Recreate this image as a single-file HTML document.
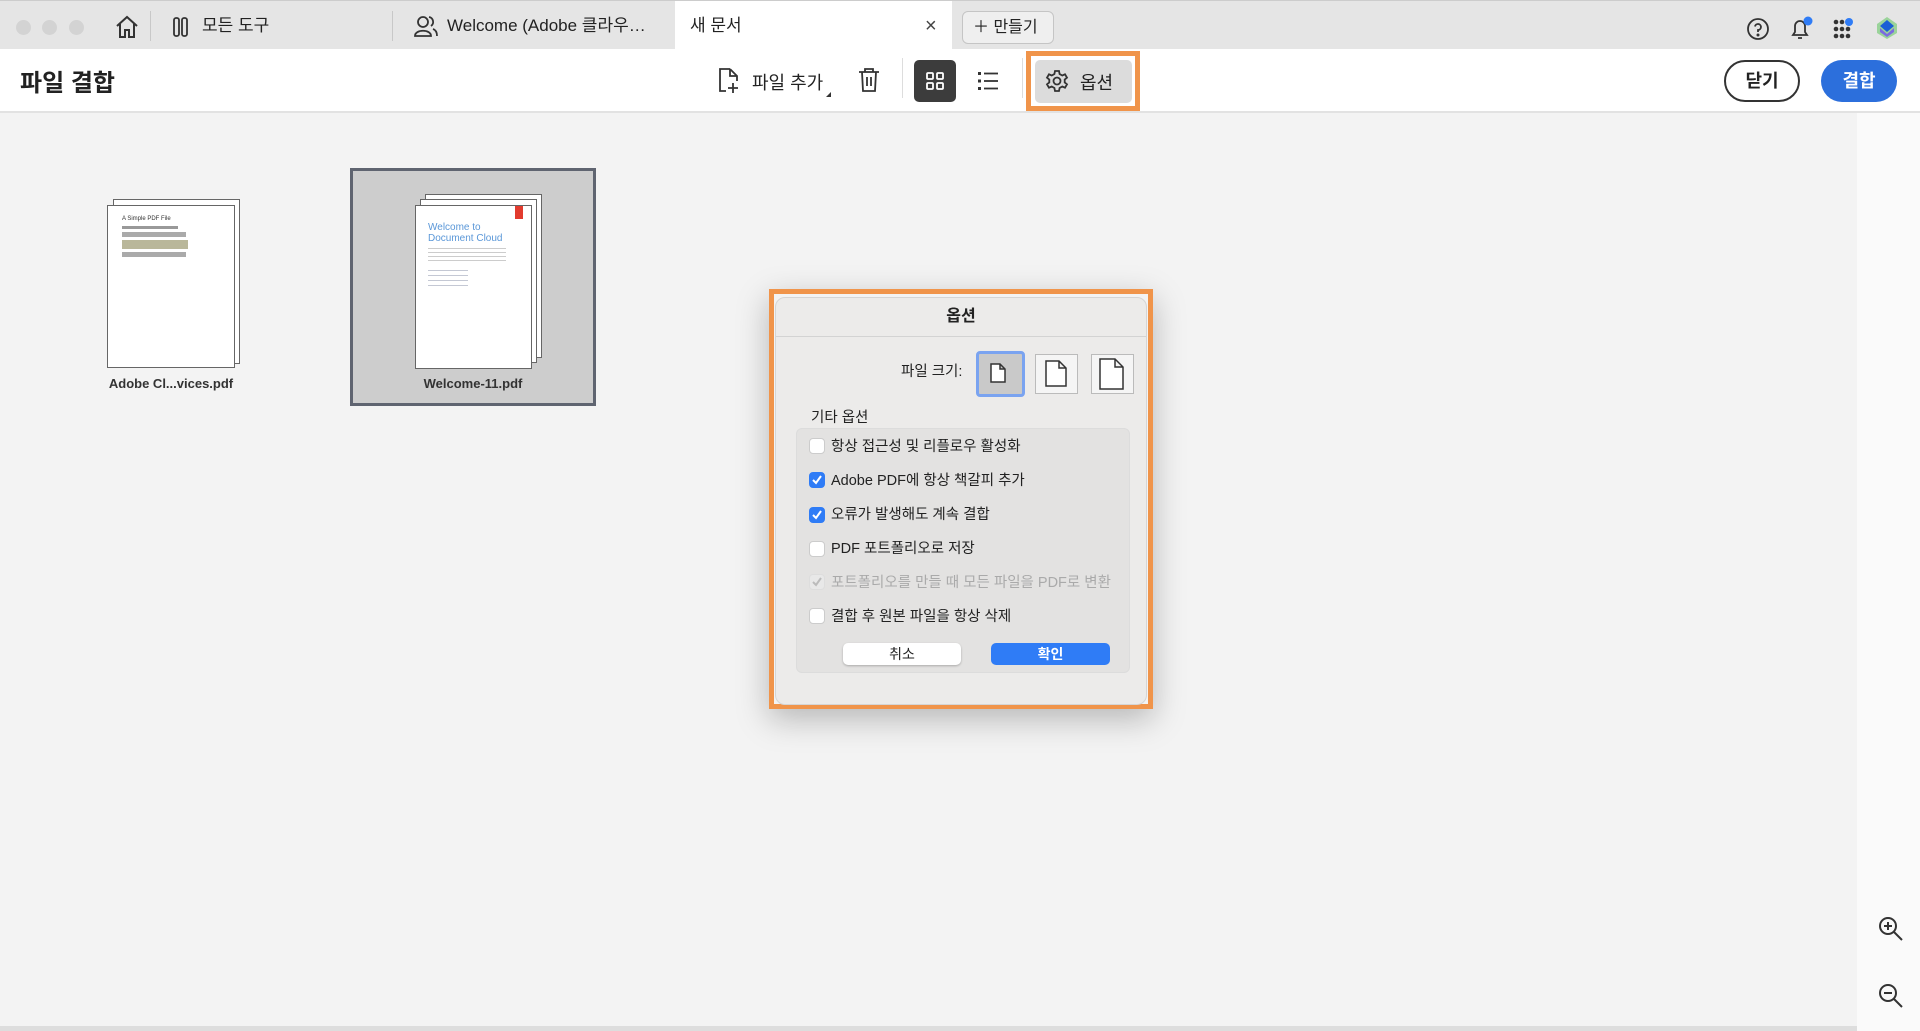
<!DOCTYPE html>
<html><head><meta charset="utf-8"><style>
*{box-sizing:border-box;margin:0;padding:0}
body{width:1920px;height:1031px;position:relative;overflow:hidden;background:#f3f3f3;font-family:"Liberation Sans","Noto Sans CJK KR",sans-serif;color:#222}
.a{position:absolute}
.tabbar{left:0;top:0;width:1920px;height:49px;background:#e5e5e5;border-top:1px solid #ccc}
.tl{width:15px;height:15px;border-radius:50%;background:#d3d3d3;top:19px}
.tb{top:0;height:100%;font-size:17px;line-height:50px}
.toolbar{left:0;top:49px;width:1920px;height:64px;background:#fff;border-bottom:2px solid #e2e2e2}
.cb{width:16px;height:16px;border-radius:4px;background:#fff;border:1px solid #ccc}
.cb.on{background:#2f7cf6;border-color:#2f7cf6}
.lbl{font-size:14.5px;color:#222;line-height:16px}
</style></head><body>
<div class="a tabbar">
 <div class="a tl" style="left:16px"></div><div class="a tl" style="left:42px"></div><div class="a tl" style="left:69px"></div>
 <svg class="a" style="left:114px;top:14px" width="26" height="24" viewBox="0 0 26 24" fill="none" stroke="#333" stroke-width="2"><path d="M3 11 L13 2 L23 11 M6 9 V22 H11 V15 H15 V22 H20 V9"/></svg>
 <div class="a" style="left:150px;top:10px;width:1px;height:30px;background:#c8c8c8"></div>
 <svg class="a" style="left:172px;top:15px" width="18" height="22" viewBox="0 0 18 22" fill="none" stroke="#333" stroke-width="1.8"><rect x="2" y="2" width="5" height="18" rx="2"/><rect x="10" y="2" width="5" height="18" rx="2"/></svg>
 <div class="a tb" style="left:202px">모든 도구</div>
 <div class="a" style="left:392px;top:10px;width:1px;height:30px;background:#c8c8c8"></div>
 <svg class="a" style="left:413px;top:13px" width="26" height="24" viewBox="0 0 26 24" fill="none" stroke="#333" stroke-width="1.8"><circle cx="10" cy="8" r="5"/><path d="M2 22 C2 15 18 15 18 22 Z"/><path d="M16 3 A5 5 0 0 1 18 12 M20 15 C23 16 24 19 24 22"/></svg>
 <div class="a tb" style="left:447px">Welcome (Adobe 클라우…</div>
 <div class="a" style="left:675px;top:0;width:277px;height:49px;background:#fff"></div>
 <div class="a tb" style="left:690px">새 문서</div>
 <div class="a tb" style="left:925px;font-size:20px;color:#444">×</div>
 <div class="a" style="left:962px;top:10px;width:92px;height:33px;border:1px solid #c5c5c5;border-radius:6px;background:#efefef;font-size:16px;line-height:31px;padding-left:10px">＋ 만들기</div>
 <svg class="a" style="left:1746px;top:16px" width="24" height="24" viewBox="0 0 24 24" fill="none" stroke="#333" stroke-width="1.8"><circle cx="12" cy="12" r="10"/><path d="M9 9.5 A3 3 0 1 1 12 13 V15"/><circle cx="12" cy="18" r=".6" fill="#333"/></svg>
 <svg class="a" style="left:1788px;top:14px" width="26" height="28" viewBox="0 0 26 28" fill="none" stroke="#333" stroke-width="1.8"><path d="M5 20 H19 L17 17 V11 A5 5 0 0 0 7 11 V17 Z M10 23 H14"/><circle cx="20" cy="6" r="4.5" fill="#2f7cf6" stroke="none"/></svg>
 <svg class="a" style="left:1832px;top:16px" width="26" height="24" viewBox="0 0 26 24" fill="#333"><g><circle cx="4" cy="5" r="2.3"/><circle cx="10" cy="5" r="2.3"/><circle cx="4" cy="12" r="2.3"/><circle cx="10" cy="12" r="2.3"/><circle cx="16" cy="12" r="2.3"/><circle cx="4" cy="19" r="2.3"/><circle cx="10" cy="19" r="2.3"/><circle cx="16" cy="19" r="2.3"/></g><circle cx="17" cy="5" r="4" fill="#2f7cf6"/></svg>
 <svg class="a" style="left:1876px;top:15px" width="22" height="24" viewBox="0 0 22 24"><path d="M11 1 L21 8 V17 L11 23 L1 17 V8 Z" fill="#9ad39a"/><path d="M11 4 L18 10 L11 16 L4 10 Z" fill="#1a5fd6"/><path d="M4 12 L11 18 L18 12 V16 L11 21 L4 16 Z" fill="#7b6be0"/></svg>
</div>
<div class="a toolbar">
 <div class="a" style="left:20px;top:14px;font-size:24px;font-weight:bold">파일 결합</div>
 <svg class="a" style="left:716px;top:18px" width="26" height="28" viewBox="0 0 26 28" fill="none" stroke="#333" stroke-width="1.8"><path d="M14 2 H4 V24 H10 M14 2 L21 9 V14 M14 2 V9 H21 M17 16 V26 M12 21 H22"/></svg>
 <div class="a" style="left:752px;top:20px;font-size:18px">파일 추가</div>
 <div class="a" style="left:826px;top:43px;border-left:5px solid transparent;border-bottom:5px solid #333"></div>
 <svg class="a" style="left:857px;top:18px" width="24" height="26" viewBox="0 0 24 26" fill="none" stroke="#333" stroke-width="1.8"><path d="M2 5 H22 M8 5 V2 H16 V5 M5 5 L6 24 H18 L19 5 M10 10 V19 M14 10 V19"/></svg>
 <div class="a" style="left:902px;top:9px;width:1px;height:40px;background:#ddd"></div>
 <div class="a" style="left:914px;top:11px;width:42px;height:42px;border-radius:5px;background:#3c3c3c"></div>
 <svg class="a" style="left:925px;top:22px" width="20" height="20" viewBox="0 0 20 20" fill="none" stroke="#fff" stroke-width="1.8"><rect x="2" y="2" width="6" height="6" rx="1"/><rect x="12" y="2" width="6" height="6" rx="1"/><rect x="2" y="12" width="6" height="6" rx="1"/><rect x="12" y="12" width="6" height="6" rx="1"/></svg>
 <svg class="a" style="left:977px;top:21px" width="22" height="22" viewBox="0 0 22 22" fill="#333"><rect x="1" y="2" width="3" height="3"/><rect x="1" y="9.5" width="3" height="3"/><rect x="1" y="17" width="3" height="3"/><rect x="7" y="2.6" width="14" height="1.8"/><rect x="7" y="10.1" width="14" height="1.8"/><rect x="7" y="17.6" width="14" height="1.8"/></svg>
 <div class="a" style="left:1022px;top:9px;width:1px;height:40px;background:#ddd"></div>
 <div class="a" style="left:1026px;top:2px;width:114px;height:60px;border:5px solid #f0944a"></div>
 <div class="a" style="left:1035px;top:11px;width:97px;height:43px;border-radius:5px;background:#dcdcdc"></div>
 <svg class="a" style="left:1045px;top:20px" width="24" height="24" viewBox="0 0 24 24" fill="none" stroke="#333" stroke-width="1.8"><circle cx="12" cy="12" r="3.5"/><path d="M10 2 H14 L14.6 5 L17.3 6.5 L20 5.3 L22 8.7 L19.7 10.6 V13.4 L22 15.3 L20 18.7 L17.3 17.5 L14.6 19 L14 22 H10 L9.4 19 L6.7 17.5 L4 18.7 L2 15.3 L4.3 13.4 V10.6 L2 8.7 L4 5.3 L6.7 6.5 L9.4 5 Z"/></svg>
 <div class="a" style="left:1080px;top:20px;font-size:18px">옵션</div>
 <div class="a" style="left:1724px;top:11px;width:76px;height:42px;border:2px solid #333;border-radius:21px;font-size:18px;text-align:center;line-height:38px;font-weight:bold">닫기</div>
 <div class="a" style="left:1821px;top:11px;width:76px;height:42px;background:#2c6fdc;border-radius:21px;font-size:18px;text-align:center;line-height:42px;color:#fff;font-weight:bold">결합</div>
</div>
<div class="a" style="left:1857px;top:113px;width:63px;height:918px;background:#fafafa"></div>
<div class="a" style="left:0;top:1026px;width:1857px;height:5px;background:#ddd"></div>
<!-- file 1 -->
<div class="a" style="left:113px;top:199px;width:127px;height:165px;background:#fff;border:1px solid #666"></div>
<div class="a" style="left:107px;top:205px;width:128px;height:163px;background:#fff;border:1px solid #666">
 <div style="margin:10px 0 0 14px;font-size:6px;color:#333">A Simple PDF File</div>
 <div style="margin:4px 0 0 14px;width:56px;height:3px;background:#999"></div>
 <div style="margin:3px 0 0 14px;width:64px;height:5px;background:#aaa"></div>
 <div style="margin:3px 0 0 14px;width:66px;height:9px;background:#b9b79a"></div>
 <div style="margin:3px 0 0 14px;width:64px;height:5px;background:#aaa"></div>
</div>
<div class="a" style="left:108px;top:376px;width:126px;text-align:center;font-size:13px;font-weight:bold;color:#333">Adobe Cl...vices.pdf</div>
<!-- file 2 -->
<div class="a" style="left:350px;top:168px;width:246px;height:238px;background:#cdcdcd;border:3px solid #5f6470"></div>
<div class="a" style="left:425px;top:194px;width:117px;height:164px;background:#fff;border:1px solid #666"></div>
<div class="a" style="left:420px;top:199px;width:117px;height:164px;background:#fff;border:1px solid #666"></div>
<div class="a" style="left:415px;top:205px;width:117px;height:164px;background:#fff;border:1px solid #666">
 <div class="a" style="right:8px;top:0;width:8px;height:13px;background:#e23b2e"></div>
 <div style="margin:16px 0 0 12px;font-size:10px;line-height:11px;color:#5a97d8">Welcome to<br>Document Cloud</div>
 <div style="margin:4px 0 0 12px;width:78px;height:14px;background:repeating-linear-gradient(#ccc 0 1px,#fff 1px 4px)"></div>
 <div style="margin:8px 0 0 12px;width:40px;height:20px;background:repeating-linear-gradient(#c4c8d4 0 1px,#fff 1px 5px)"></div>
</div>
<div class="a" style="left:350px;top:376px;width:246px;text-align:center;font-size:13px;font-weight:bold;color:#333">Welcome-11.pdf</div>
<!-- dialog -->
<div class="a" style="left:769px;top:289px;width:384px;height:420px;border:5px solid #f0944a;box-shadow:0 10px 30px rgba(0,0,0,.25)"></div>
<div class="a" style="left:775px;top:297px;width:372px;height:408px;background:#ecebea;border-radius:10px;border:1px solid #d5d5d5">
 <div class="a" style="left:0;top:4px;width:100%;text-align:center;font-size:16px;font-weight:bold">옵션</div>
 <div class="a" style="left:0;top:38px;width:100%;height:1px;background:#d3d3d3"></div>
 <div class="a lbl" style="left:125px;top:66px">파일 크기:</div>
 <div class="a" style="left:200px;top:53px;width:49px;height:46px;border:3px solid #7aa3f0;border-radius:4px;background:#c9c9c9"></div>
 <svg class="a" style="left:214px;top:65px" width="16" height="20" viewBox="0 0 16 20" fill="#fff" stroke="#333" stroke-width="1.5"><path d="M1 1 H10 L15 6 V19 H1 Z M10 1 V6 H15"/></svg>
 <div class="a" style="left:259px;top:56px;width:43px;height:40px;border:1px solid #bbb;background:#f5f5f5"></div>
 <svg class="a" style="left:269px;top:62px" width="22" height="27" viewBox="0 0 22 27" fill="#fff" stroke="#333" stroke-width="1.5"><path d="M1 1 H14 L21 8 V26 H1 Z M14 1 V8 H21"/></svg>
 <div class="a" style="left:315px;top:56px;width:43px;height:40px;border:1px solid #bbb;background:#f5f5f5"></div>
 <svg class="a" style="left:323px;top:60px" width="25" height="32" viewBox="0 0 25 32" fill="#fff" stroke="#333" stroke-width="1.5"><path d="M1 1 H16 L24 9 V31 H1 Z M16 1 V9 H24"/></svg>
 <div class="a lbl" style="left:35px;top:112px">기타 옵션</div>
 <div class="a" style="left:20px;top:130px;width:334px;height:245px;background:#e3e2e1;border-radius:6px;border:1px solid #dcdcdc"></div>
 <div class="a cb" style="left:33px;top:140px"></div><div class="a lbl" style="left:55px;top:141px">항상 접근성 및 리플로우 활성화</div>
 <div class="a cb on" style="left:33px;top:174px"></div><div class="a lbl" style="left:55px;top:175px">Adobe PDF에 항상 책갈피 추가</div>
 <div class="a cb on" style="left:33px;top:209px"></div><div class="a lbl" style="left:55px;top:209px">오류가 발생해도 계속 결합</div>
 <div class="a cb" style="left:33px;top:243px"></div><div class="a lbl" style="left:55px;top:243px">PDF 포트폴리오로 저장</div>
 <div class="a cb" style="left:33px;top:276px;background:#e8e8e8;border-color:#ddd"></div><div class="a lbl" style="left:55px;top:277px;color:#aaa">포트폴리오를 만들 때 모든 파일을 PDF로 변환</div>
 <div class="a cb" style="left:33px;top:310px"></div><div class="a lbl" style="left:55px;top:311px">결합 후 원본 파일을 항상 삭제</div>
 <svg class="a" style="left:35px;top:176px" width="12" height="12" viewBox="0 0 12 12" fill="none" stroke="#fff" stroke-width="2"><path d="M2 6 L5 9 L10 2"/></svg>
 <svg class="a" style="left:35px;top:211px" width="12" height="12" viewBox="0 0 12 12" fill="none" stroke="#fff" stroke-width="2"><path d="M2 6 L5 9 L10 2"/></svg>
 <svg class="a" style="left:35px;top:278px" width="12" height="12" viewBox="0 0 12 12" fill="none" stroke="#bbb" stroke-width="2"><path d="M2 6 L5 9 L10 2"/></svg>
 <div class="a" style="left:67px;top:345px;width:118px;height:22px;background:#fff;border-radius:5px;box-shadow:0 1px 2px rgba(0,0,0,.25);text-align:center;font-size:14px;line-height:22px">취소</div>
 <div class="a" style="left:215px;top:345px;width:119px;height:22px;background:#2f7cf6;border-radius:5px;text-align:center;font-size:14px;line-height:22px;color:#fff;font-weight:bold">확인</div>
</div>
<svg class="a" style="left:1878px;top:916px" width="26" height="26" viewBox="0 0 26 26" fill="none" stroke="#333" stroke-width="2"><circle cx="10" cy="10" r="8"/><path d="M16 16 L24 24 M6 10 H14 M10 6 V14"/></svg>
<svg class="a" style="left:1878px;top:983px" width="26" height="26" viewBox="0 0 26 26" fill="none" stroke="#333" stroke-width="2"><circle cx="10" cy="10" r="8"/><path d="M16 16 L24 24 M6 10 H14"/></svg>
</body></html>
